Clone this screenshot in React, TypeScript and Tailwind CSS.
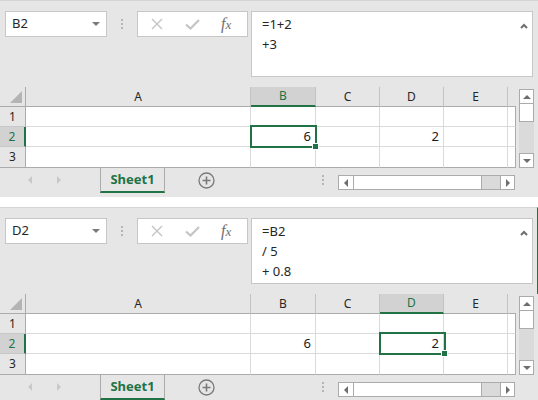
import React from 'react';

const cols = [
  { id: 'A', w: 'w-[225px]' },
  { id: 'B', w: 'w-[65px]' },
  { id: 'C', w: 'w-[64px]' },
  { id: 'D', w: 'w-[64px]' },
  { id: 'E', w: 'w-[64px]' },
];

type PanelProps = {
  name: string;
  lines: string[];
  selCol: string;
  selRow: number;
  values: Record<string, string>;
  edge?: boolean;
};

function Tri({ dir, className }: { dir: 'up' | 'down' | 'left' | 'right'; className?: string }) {
  const pts = {
    up: '0,5 4,1 8,5',
    down: '0,1 8,1 4,5',
    left: '5,0 5,8 1,4',
    right: '1,0 1,8 5,4',
  }[dir];
  const vert = dir === 'up' || dir === 'down';
  return (
    <svg width={vert ? 8 : 6} height={vert ? 6 : 8} viewBox={vert ? '0 0 8 6' : '0 0 6 8'} className={className}>
      <polygon points={pts} fill="currentColor" />
    </svg>
  );
}

function Dots() {
  return (
    <div className="flex flex-col gap-[2px]">
      <div className="w-[2px] h-[2px] bg-[#b5b5b5]" />
      <div className="w-[2px] h-[2px] bg-[#b5b5b5]" />
      <div className="w-[2px] h-[2px] bg-[#b5b5b5]" />
    </div>
  );
}

function FormulaRow({ name, lines, edge }: { name: string; lines: string[]; edge?: boolean }) {
  return (
    <div className={`h-[87px] flex items-start pt-[10px] pl-[5px] border-t border-[#d4d4d4] ${edge ? 'border-r border-r-[#217346]' : ''}`}>
      {/* name box */}
      <div className="w-[102px] h-[26px] bg-white border border-[#c6c6c6] flex items-center justify-between pl-[6px] pr-[6px]">
        <span className="text-[13px] text-[#262626]">{name}</span>
        <Tri dir="down" className="text-[#7a7a7a]" />
      </div>
      <div className="w-[30px] h-[26px] flex items-center justify-center">
        <Dots />
      </div>
      {/* cancel / enter / fx */}
      <div className="w-[111px] h-[26px] bg-white border border-[#c6c6c6] flex items-center pl-[13px]">
        <svg width="12" height="12" viewBox="0 0 12 12" className="text-[#c4c4c4]">
          <path d="M1 1L11 11M11 1L1 11" stroke="currentColor" strokeWidth="1.4" fill="none" />
        </svg>
        <svg width="15" height="11" viewBox="0 0 15 11" className="ml-[22px] text-[#c4c4c4]">
          <path d="M1 5.5L5.5 9.5L14 1" stroke="currentColor" strokeWidth="2.2" fill="none" />
        </svg>
        <span className="ml-[21px] text-[16px] italic text-[#6e6e6e] font-['Liberation_Serif',serif] leading-none">
          f<span className="text-[13px]">x</span>
        </span>
      </div>
      {/* formula text */}
      <div className="ml-[3px] w-[282px] h-[66px] bg-white border border-[#c6c6c6] flex justify-between pl-[10px] pr-[4px] pt-[2px]">
        <div className="text-[13px] text-[#262626] leading-[20px]">
          {lines.map((l, i) => (
            <div key={i}>{l}</div>
          ))}
        </div>
        <svg width="8" height="6" viewBox="0 0 8 6" className="mt-[9px] text-[#6e6e6e]">
          <path d="M1 5L4 2L7 5" stroke="currentColor" strokeWidth="2" fill="none" />
        </svg>
      </div>
    </div>
  );
}

function Grid({ selCol, selRow, values }: { selCol: string; selRow: number; values: Record<string, string> }) {
  return (
    <div className="flex">
      <div className="w-[516px]">
        {/* column headers */}
        <div className="flex h-[20px]">
          <div className="w-[26px] h-[20px] border-r border-b border-[#ababab] flex items-end justify-end pr-[3px] pb-[3px]">
            <svg width="12" height="12" viewBox="0 0 12 12">
              <polygon points="12,0 12,12 0,12" fill="#b4b4b4" />
            </svg>
          </div>
          {cols.map((c) => {
            const sel = c.id === selCol;
            return (
              <div
                key={c.id}
                className={`${c.w} h-[20px] border-r border-[#c3c3c3] flex items-center justify-center text-[12px] ${
                  sel ? 'bg-[#d2d2d2] text-[#217346] border-b-2 border-b-[#217346]' : 'text-[#262626] border-b border-b-[#ababab]'
                }`}
              >
                {c.id}
              </div>
            );
          })}
          <div className="w-[8px] h-[20px] border-b border-[#ababab]" />
        </div>
        {/* rows */}
        {[1, 2, 3].map((r) => {
          const selR = r === selRow;
          const last = r === 3;
          return (
            <div key={r} className={`flex ${last ? 'h-[21px]' : 'h-[20px]'}`}>
              <div
                className={`w-[26px] flex items-center justify-center text-[12px] border-[#c8c8c8] ${last ? 'border-b border-b-[#ababab]' : 'border-b'} ${
                  selR
                    ? 'bg-[#d2d2d2] text-[#217346] border-r-2 border-r-[#217346]'
                    : 'text-[#262626] border-r border-r-[#ababab]'
                }`}
              >
                {r}
              </div>
              {cols.map((c) => {
                const key = `${c.id}${r}`;
                const active = c.id === selCol && r === selRow;
                return (
                  <div
                    key={key}
                    className={`${c.w} relative bg-white border-r border-[#dadada] flex items-center justify-end pr-[4px] text-[13px] text-[#1a1a1a] ${
                      last ? 'border-b border-b-[#ababab]' : 'border-b'
                    }`}
                  >
                    {values[key]}
                    {active && (
                      <div className="absolute z-10 -top-[2px] -left-[1px] w-[67px] h-[23px] border-2 border-[#217346]">
                        <div className="absolute -right-[4px] -bottom-[4px] w-[7px] h-[7px] bg-[#217346] border border-white" />
                      </div>
                    )}
                  </div>
                );
              })}
              <div className={`w-[8px] bg-white border-r border-r-[#ababab] ${last ? 'border-b border-b-[#ababab]' : 'border-b border-[#dadada]'}`} />
            </div>
          );
        })}
      </div>
      {/* vertical scrollbar */}
      <div className="ml-[3px] mt-[2px] w-[15px] h-[79px] flex flex-col">
        <div className="h-[15px] bg-white border border-[#ababab] flex items-center justify-center">
          <Tri dir="up" className="text-[#6e6e6e]" />
        </div>
        <div className="h-[18px] bg-white border-x border-b border-[#ababab]" />
        <div className="flex-1 bg-[#dadada]" />
        <div className="h-[15px] bg-white border border-[#ababab] flex items-center justify-center">
          <Tri dir="down" className="text-[#6e6e6e]" />
        </div>
      </div>
    </div>
  );
}

function TabBar() {
  return (
    <div className="h-[29px] flex items-start">
      <div className="w-[100px] h-[24px] flex items-center pl-[27px] gap-[23px]">
        <Tri dir="left" className="text-[#c8c8c8]" />
        <Tri dir="right" className="text-[#c8c8c8]" />
      </div>
      <div className="w-[65px] h-[25px] border-x border-[#ababab] border-b-2 border-b-[#217346] flex items-center justify-center text-[13px] font-bold text-[#217346]">
        Sheet1
      </div>
      <div className="ml-[33px] h-[24px] flex items-center">
        <svg width="17" height="17" viewBox="0 0 17 17" className="text-[#7a7a7a]">
          <circle cx="8.5" cy="8.5" r="7.5" stroke="currentColor" strokeWidth="1.3" fill="none" />
          <path d="M8.5 4.5V12.5M4.5 8.5H12.5" stroke="currentColor" strokeWidth="1.6" />
        </svg>
      </div>
      <div className="ml-[107px] h-[24px] flex items-center">
        <Dots />
      </div>
      <div className="ml-[14px] mt-[7px] w-[177px] h-[15px] border border-[#ababab] flex">
        <div className="w-[15px] bg-white border-r border-[#ababab] flex items-center justify-center">
          <Tri dir="left" className="text-[#6e6e6e]" />
        </div>
        <div className="w-[128px] bg-white border-r border-[#ababab]" />
        <div className="flex-1 bg-[#dadada]" />
        <div className="w-[14px] bg-white border-l border-[#ababab] flex items-center justify-center">
          <Tri dir="right" className="text-[#6e6e6e]" />
        </div>
      </div>
    </div>
  );
}

function Panel({ name, lines, selCol, selRow, values, edge }: PanelProps) {
  return (
    <div className="bg-[#e6e6e6]">
      <FormulaRow name={name} lines={lines} edge={edge} />
      <Grid selCol={selCol} selRow={selRow} values={values} />
      <TabBar />
    </div>
  );
}

export default function App() {
  return (
    <div className="w-[538px] h-[400px] overflow-hidden bg-white font-['Noto_Sans',sans-serif]">
      <Panel name="B2" lines={['=1+2', '+3']} selCol="B" selRow={2} values={{ B2: '6', D2: '2' }} />
      <div className="h-[10px] bg-white" />
      <Panel name="D2" lines={['=B2', '/ 5', '+ 0.8']} selCol="D" selRow={2} values={{ B2: '6', D2: '2' }} edge />
    </div>
  );
}
